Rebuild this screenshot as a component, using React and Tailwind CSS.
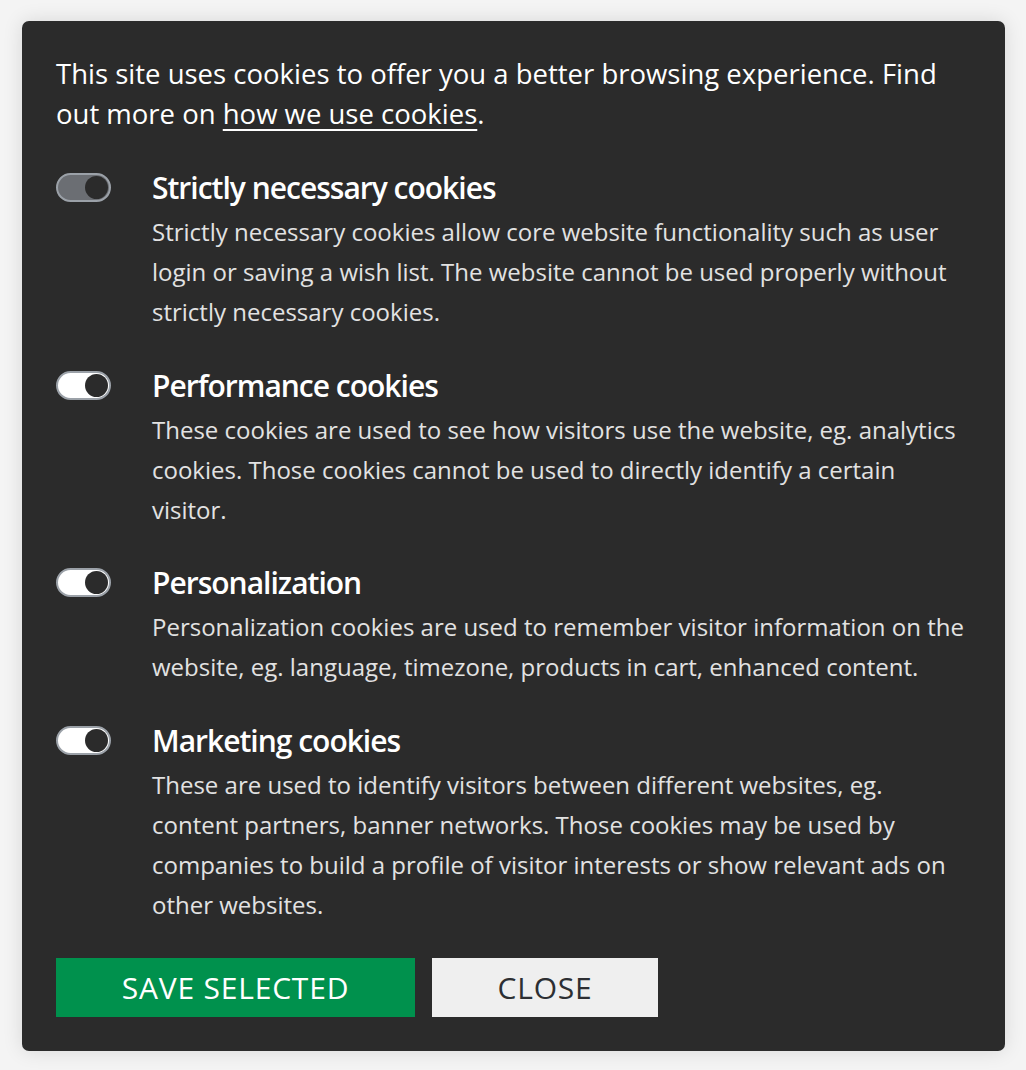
import React from "react";

function Toggle({ disabled }) {
  return (
    <div
      className={`relative w-[55px] h-[29px] rounded-full border-2 border-[#9ba1a8] shrink-0 ${
        disabled ? "bg-[#6b6e73]" : "bg-white"
      }`}
    >
      <div className="absolute right-[1px] top-[1px] w-[23px] h-[23px] rounded-full bg-[#2b2b2b]" />
    </div>
  );
}

const sections = [
  {
    title: "Strictly necessary cookies",
    disabled: true,
    text: "Strictly necessary cookies allow core website functionality such as user login or saving a wish list. The website cannot be used properly without strictly necessary cookies.",
  },
  {
    title: "Performance cookies",
    text: "These cookies are used to see how visitors use the website, eg. analytics cookies. Those cookies cannot be used to directly identify a certain visitor.",
  },
  {
    title: "Personalization",
    text: "Personalization cookies are used to remember visitor information on the website, eg. language, timezone, products in cart, enhanced content.",
  },
  {
    title: "Marketing cookies",
    text: "These are used to identify visitors between different websites, eg. content partners, banner networks. Those cookies may be used by companies to build a profile of visitor interests or show relevant ads on other websites.",
  },
];

export default function App() {
  return (
    <div
      className="min-h-[1070px] bg-[#f4f4f4] pt-[21px] pl-[22px] pr-[21px] pb-[19px]"
      style={{ fontFamily: "'Open Sans', sans-serif" }}
    >
      <div className="w-[983px] h-[1030px] bg-[#2b2b2b] rounded-[7px] shadow-[0_0_20px_rgba(0,0,0,0.12)] pl-[34px] pr-[36px] pt-[33px]">
        <p className="text-white text-[27.5px] leading-[40px]">
          This site uses cookies to offer you a better browsing experience. Find out more on{" "}
          <a className="underline underline-offset-[5px] decoration-[2px]">how we use cookies</a>.
        </p>
        <div className="mt-[36px] flex flex-col gap-[35.5px]">
          {sections.map((s) => (
            <div key={s.title} className="flex gap-[41px]">
              <div className="pt-[3px]">
                <Toggle disabled={s.disabled} />
              </div>
              <div>
                <div className="text-white text-[30px] font-semibold leading-[36px] tracking-[-1px]">{s.title}</div>
                <p className="text-[#e2e2e2] text-[24px] leading-[40px] mt-[6px]">{s.text}</p>
              </div>
            </div>
          ))}
        </div>
        <div className="mt-[33px] flex gap-[17px]">
          <button className="w-[359px] h-[59px] bg-[#00914d] text-white text-[30px] tracking-[0.8px] uppercase">Save selected</button>
          <button className="w-[226px] h-[59px] bg-[#efefef] text-[#2d2f33] text-[30px] tracking-[0.8px] uppercase">Close</button>
        </div>
      </div>
    </div>
  );
}
